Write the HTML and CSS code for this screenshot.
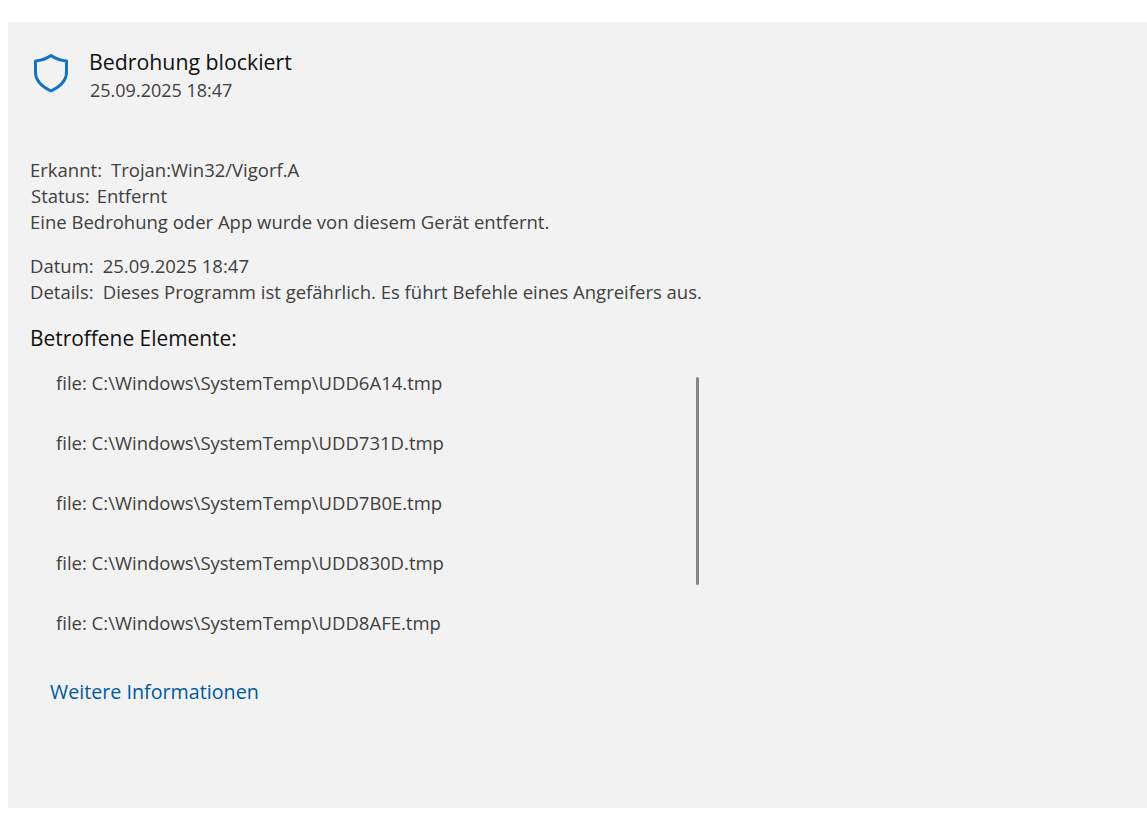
FILE: index.html
```html
<!DOCTYPE html>
<html lang="de">
<head>
  <meta charset="UTF-8">
  <meta name="viewport" content="width=device-width, initial-scale=1.0">
  <title>Bedrohung blockiert</title>
  <link rel="stylesheet" href="styles.css">
</head>
<body>
  <div class="panel">
    <div class="head">
      <svg class="shield" width="36" height="40" viewBox="0 0 36 40">
        <path d="M18 2.5 C23 6 27.500 7.500 33.500 8 V19 C33.500 28 27.500 33.500 18 38 C8.500 33.500 2.500 28 2.500 19 V8 C8.500 7.500 13 6 18 2.500 Z" fill="none" stroke="#1173c6" stroke-width="3" stroke-linejoin="round"/>
      </svg>
      <div class="head_text">
        <div class="title">Bedrohung blockiert</div>
        <div class="stamp">25.09.2025 18:47</div>
      </div>
    </div>

    <div class="info">
      <p class="line"><span class="key">Erkannt:</span>Trojan:Win32/Vigorf.A</p>
      <p class="line status"><span class="key">Status:</span>Entfernt</p>
      <p class="line">Eine Bedrohung oder App wurde von diesem Gerät entfernt.</p>
    </div>

    <div class="info second">
      <p class="line"><span class="key">Datum:</span>25.09.2025 18:47</p>
      <p class="line"><span class="key">Details:</span>Dieses Programm ist gefährlich. Es führt Befehle eines Angreifers aus.</p>
    </div>

    <h2 class="sub">Betroffene Elemente:</h2>

    <div class="files">
      <ul class="file_list">
        <li>file: C:\Windows\SystemTemp\UDD6A14.tmp</li>
        <li>file: C:\Windows\SystemTemp\UDD731D.tmp</li>
        <li>file: C:\Windows\SystemTemp\UDD7B0E.tmp</li>
        <li>file: C:\Windows\SystemTemp\UDD830D.tmp</li>
        <li>file: C:\Windows\SystemTemp\UDD8AFE.tmp</li>
      </ul>
      <div class="scroll_thumb"></div>
    </div>

    <a class="more" href="#">Weitere Informationen</a>
  </div>
</body>
</html>
```

FILE: styles.css
```css
html, body {
  margin: 0;
  padding: 0;
  background-color: white;
}
body {
  padding: 22px 0 9px 8px;
  font-family: "Open Sans", "Noto Sans", sans-serif;
  color: #404040;
}
.panel {
  height: 786px;
  background-color: #f2f2f2;
  padding-left: 22px;
  display: flex;
  flex-direction: column;
  align-items: flex-start;
}
.head {
  display: flex;
  margin-top: 30px;
}
.shield {
  margin: 1px 20px 0 3px;
}
.head_text {
  margin-top: -3px;
}
.title {
  font-size: 21.300px;
  line-height: 26px;
  color: #111;
}
.stamp {
  font-size: 18px;
  line-height: 28px;
  margin: 1px 0 0 1px;
}
.info {
  margin-top: 53px;
}
.info.second {
  margin-top: 18px;
}
.line {
  margin: 0;
  font-size: 18.500px;
  line-height: 26px;
  white-space: nowrap;
}
.status {
  margin-left: 1px;
}
.status .key {
  margin-right: 7px;
}
.key {
  margin-right: 9px;
}
.sub {
  margin: 19px 0 0;
  font-size: 20.900px;
  line-height: 28px;
  font-weight: 400;
  color: #111;
}
.files {
  position: relative;
  width: 669px;
  margin-top: 18px;
}
.file_list {
  list-style: none;
  margin: 0;
  padding: 0 0 0 26px;
}
.file_list li {
  font-size: 18.500px;
  line-height: 26px;
  height: 60px;
}
.scroll_thumb {
  position: absolute;
  top: 7px;
  right: 0;
  width: 3px;
  height: 208px;
  border-radius: 2px;
  background-color: #868686;
}
.more {
  margin: 9px 0 0 20px;
  font-size: 19.700px;
  line-height: 26px;
  color: #005a9e;
  text-decoration: none;
}
```
